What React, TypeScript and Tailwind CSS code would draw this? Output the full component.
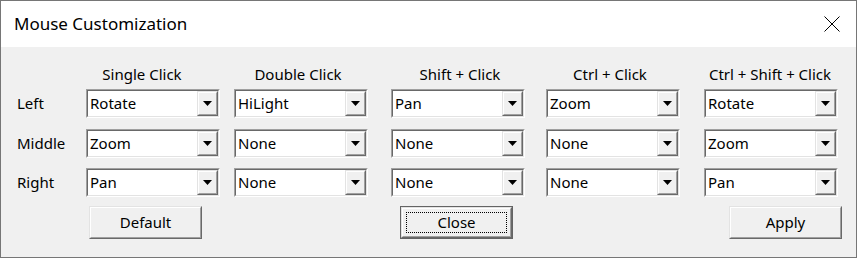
const columns = ['Single Click', 'Double Click', 'Shift + Click', 'Ctrl + Click', 'Ctrl + Shift + Click'];

// the first header sits a little left of its combo in the original dialog
const headerPad = ['pr-[22px]', 'pr-[6px]', 'pl-[4px]', 'pr-[6px]', 'pr-[2px]'];

const rows: Array<{ label: string; values: string[]; className: string }> = [
  { label: 'Left', values: ['Rotate', 'HiLight', 'Pan', 'Zoom', 'Rotate'], className: 'mt-[4px]' },
  { label: 'Middle', values: ['Zoom', 'None', 'None', 'None', 'Zoom'], className: 'mt-[11px]' },
  { label: 'Right', values: ['Pan', 'None', 'None', 'None', 'Pan'], className: 'mt-[10px]' },
];

function Combo({ value }: { value: string }) {
  return (
    <div className="w-[134px] h-[29px] border border-t-[#a0a0a0] border-l-[#a0a0a0] border-r-white border-b-white">
      <div className="flex h-full border border-t-[#696969] border-l-[#696969] border-r-[#e3e3e3] border-b-[#e3e3e3] bg-white">
        <span className="flex-1 pl-[2px] leading-[25px]">{value}</span>
        {/* drop-down button */}
        <div className="w-[21px] h-full border border-t-[#e3e3e3] border-l-[#e3e3e3] border-r-[#696969] border-b-[#696969]">
          <div className="flex h-full items-center justify-center border border-t-white border-l-white border-r-[#a0a0a0] border-b-[#a0a0a0] bg-[#f0f0f0]">
            <svg width="9" height="5" viewBox="0 0 9 5">
              <path d="M0 0h9L4.5 5z" fill="#000" />
            </svg>
          </div>
        </div>
      </div>
    </div>
  );
}

function Button({ label, focused, className }: { label: string; focused?: boolean; className?: string }) {
  return (
    <div className={`w-[113px] h-[33px] ${focused ? 'border border-[#646464]' : ''} ${className ?? ''}`}>
      <div className="h-full border border-t-[#e3e3e3] border-l-[#e3e3e3] border-r-[#696969] border-b-[#696969]">
        <div className="flex h-full items-center justify-center border border-t-white border-l-white border-r-[#a0a0a0] border-b-[#a0a0a0] bg-[#f0f0f0] p-[3px]">
          <div
            className={`flex h-full w-full items-center justify-center ${focused ? 'border border-dotted border-black' : ''}`}
          >
            {label}
          </div>
        </div>
      </div>
    </div>
  );
}

export default function App() {
  return (
    <div className="flex h-[258px] w-[857px] flex-col border border-[#767676] bg-[#f0f0f0] font-['Noto_Sans',sans-serif] text-[15px] text-black">
      {/* Title bar */}
      <div className="flex h-[46px] items-center justify-between bg-white pl-[13px] pr-[16px]">
        <span className="text-[17px]">Mouse Customization</span>
        <svg width="16" height="16" viewBox="0 0 16 16">
          <path d="M0.5 0.5L15.5 15.5M15.5 0.5L0.5 15.5" stroke="#000" strokeWidth="1" />
        </svg>
      </div>

      <div className="flex flex-col">
        <div className="mt-[16px] grid h-[22px] grid-cols-[85px_148px_157px_155px_158px_134px] items-center">
          <div />
          {columns.map((c, i) => (
            <div key={c} className={`w-[134px] text-center ${headerPad[i]}`}>
              {c}
            </div>
          ))}
        </div>

        {rows.map((row) => (
          <div
            key={row.label}
            className={`grid grid-cols-[85px_148px_157px_155px_158px_134px] items-center ${row.className}`}
          >
            <div className="pl-[16px]">{row.label}</div>
            {row.values.map((v, i) => (
              <Combo key={i} value={v} />
            ))}
          </div>
        ))}

        <div className="mt-[9px] flex">
          <Button label="Default" className="ml-[88px]" />
          <Button label="Close" focused className="ml-[198px]" />
          <Button label="Apply" className="ml-[216px]" />
        </div>
      </div>
    </div>
  );
}
